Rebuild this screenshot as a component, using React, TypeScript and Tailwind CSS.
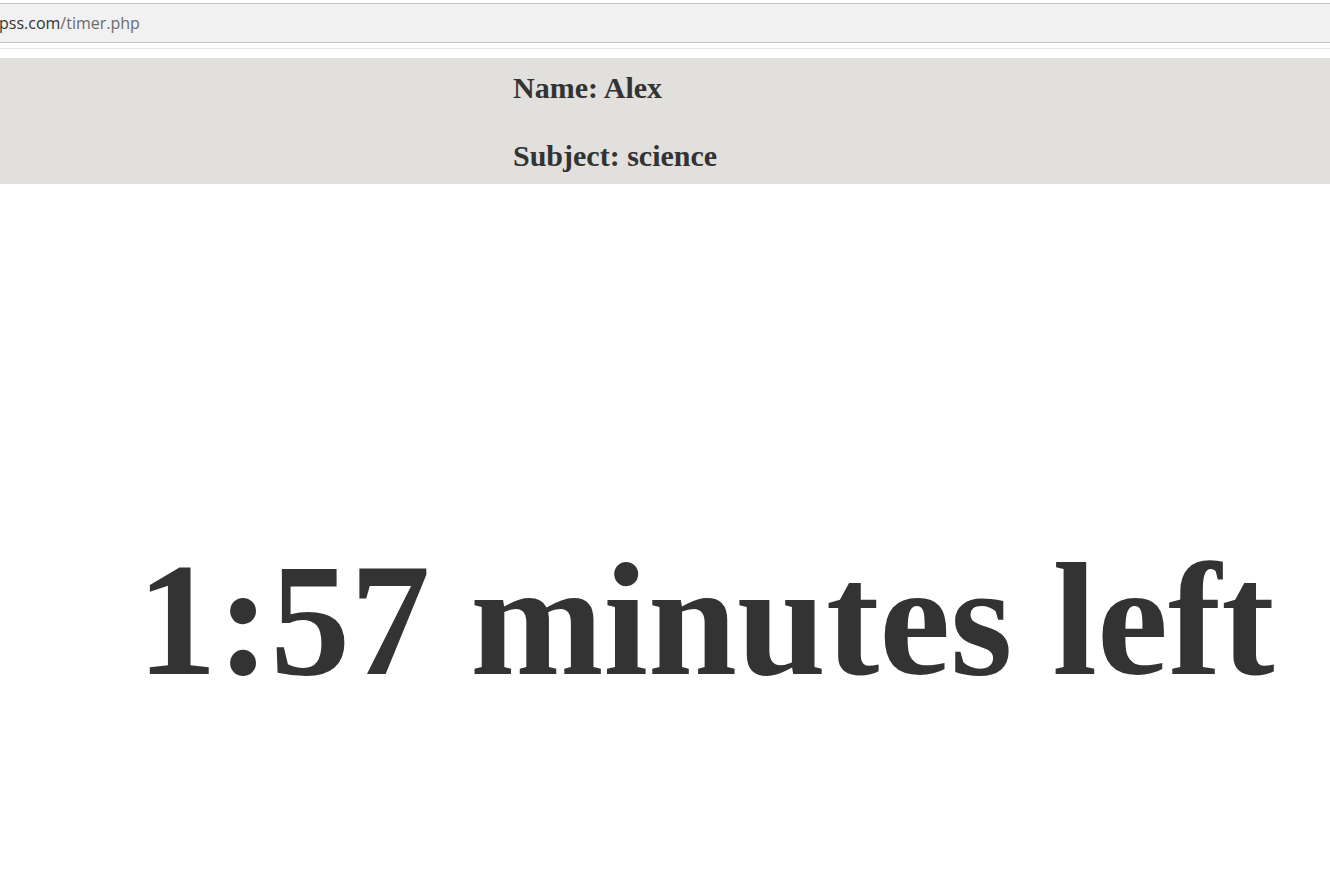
export default function App() {
  return (
    <div className="min-h-[892px] bg-white text-[#333]" style={{ fontFamily: '"Liberation Serif", "Times New Roman", serif' }}>
      {/* address bar strip */}
      <div className="pt-[3px]">
        <div className="h-[40px] border-y border-[#c4c4c4] bg-[#f1f1f1] flex items-center">
          <span className="text-[16px] -ml-px" style={{ fontFamily: '"Open Sans", "Noto Sans", sans-serif' }}>
            <span className="text-[#333]">pss.com</span>
            <span className="text-[#6b6b6b]">/timer.php</span>
          </span>
        </div>
        <div className="h-[5px]" />
        <div className="h-px bg-[#e6e6e6]" />
      </div>

      <div className="mt-[9px] bg-[#e1e0dd] h-[126px] pl-[513px] pt-[15px] flex flex-col gap-[38px]">
        <h2 className="text-[30px] font-bold leading-[30px]">Name: Alex</h2>
        <h2 className="text-[30px] font-bold leading-[30px]">Subject: science</h2>
      </div>

      <div className="pt-[356px] pl-[137px]">
        <h1 className="text-[160px] font-bold leading-none whitespace-nowrap">1:57 minutes left</h1>
      </div>
    </div>
  );
}
